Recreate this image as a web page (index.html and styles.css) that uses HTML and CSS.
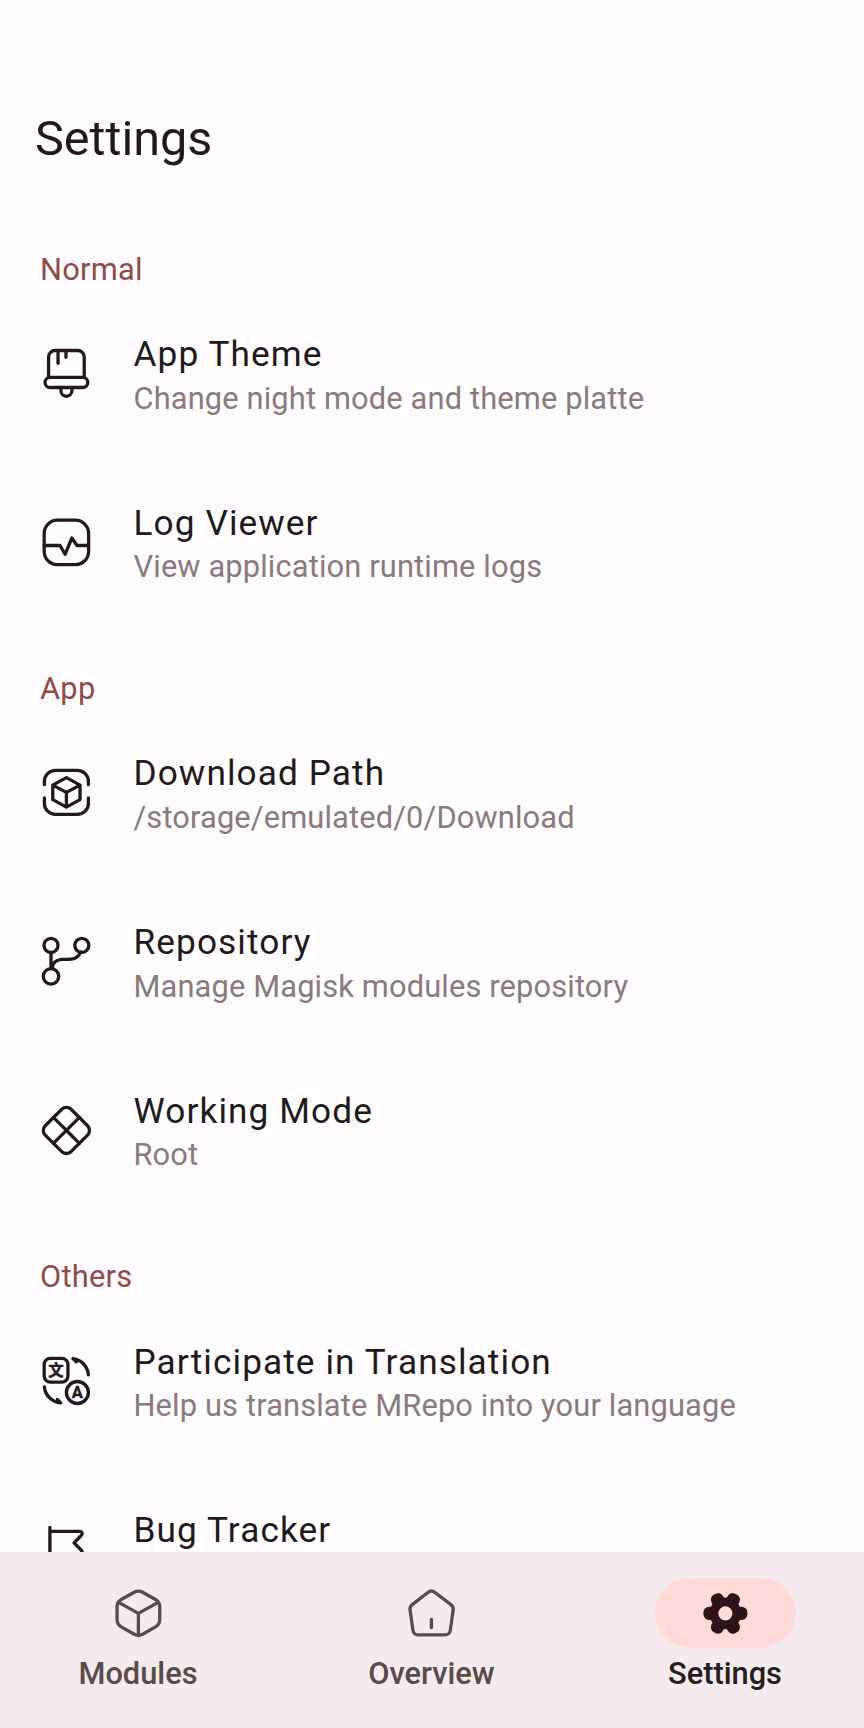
FILE: index.html
```html
<!DOCTYPE html>
<html lang="en">
<head>
    <meta charset="UTF-8">
    <meta name="viewport" content="width=device-width, initial-scale=1.0">
    <title>Settings</title>
    <link rel="stylesheet" href="styles.css">
</head>
<body>
    <div class="screen">
        <main class="content">
            <h1 class="page-title">Settings</h1>

            <div class="group-label">Normal</div>
            <div class="row">
                <svg class="icon" viewBox="0 0 24 24">
                    <path d="M3.9 13.8V4.6a3 3 0 0 1 3-3h10.2a3 3 0 0 1 3 3v9.2"/>
                    <rect x="2.3" y="13.8" width="19.4" height="4.6" rx="2.3"/>
                    <path d="M9.5 18.4v1.5a2.5 2.5 0 0 0 5 0v-1.5M8.2 1.6v5.8M11.8 1.6v3.1"/>
                </svg>
                <div class="row-text">
                    <div class="row-title">App Theme</div>
                    <div class="row-sub">Change night mode and theme platte</div>
                </div>
            </div>
            <div class="row">
                <svg class="icon" viewBox="0 0 24 24">
                    <rect x="1.9" y="1.9" width="20.2" height="20.2" rx="6"/>
                    <path d="M1.9 13.4H9.1L11.4 17.4L14.5 10L16.8 13.4H22.1"/>
                </svg>
                <div class="row-text">
                    <div class="row-title">Log Viewer</div>
                    <div class="row-sub">View application runtime logs</div>
                </div>
            </div>

            <div class="group-label">App</div>
            <div class="row">
                <svg class="icon" viewBox="0 0 24 24">
                    <path d="M2 8.5V7a5 5 0 0 1 5-5h10a5 5 0 0 1 5 5v1.5M2 14.5V17a5 5 0 0 0 5 5h10a5 5 0 0 0 5-5v-2.5"/>
                    <path d="M12 5.3l6.2 3.4v6.6L12 18.7l-6.2-3.4V8.7zM5.8 8.7L12 12l6.2-3.3M12 12v6.7"/>
                </svg>
                <div class="row-text">
                    <div class="row-title">Download Path</div>
                    <div class="row-sub">/storage/emulated/0/Download</div>
                </div>
            </div>
            <div class="row">
                <svg class="icon" viewBox="0 0 24 24">
                    <circle cx="5" cy="4.7" r="3.2"/>
                    <circle cx="19" cy="4.7" r="3.2"/>
                    <circle cx="5" cy="18.8" r="3.5"/>
                    <path d="M5 7.9v7.4M5.6 15c0-2.6 2-3.6 4.2-3.9h3.2c2.5 0 4.6-1 5.5-3.3"/>
                </svg>
                <div class="row-text">
                    <div class="row-title">Repository</div>
                    <div class="row-sub">Manage Magisk modules repository</div>
                </div>
            </div>
            <div class="row">
                <svg class="icon" viewBox="0 0 24 24">
                    <rect x="3.7" y="3.7" width="16.6" height="16.6" rx="3" transform="rotate(45 12 12)"/>
                    <path d="M6.1 6.1L17.9 17.9M17.9 6.1L6.1 17.9"/>
                </svg>
                <div class="row-text">
                    <div class="row-title">Working Mode</div>
                    <div class="row-sub">Root</div>
                </div>
            </div>

            <div class="group-label">Others</div>
            <div class="row">
                <svg class="icon" viewBox="0 0 24 24">
                    <rect x="1.9" y="2" width="10.8" height="10.8" rx="2.8"/>
                    <circle cx="17" cy="17.5" r="5"/>
                    <path d="M15 2.1a8 8 0 0 1 7 7.4M15 2.1l1.5 1.5M2 15a8 8 0 0 0 7.4 7.2M9.4 22.2l-1.5-1.5"/>
                    <text class="icon-glyph cjk" x="7.3" y="9.9">文</text>
                    <text class="icon-glyph" x="17" y="20.2">A</text>
                </svg>
                <div class="row-text">
                    <div class="row-title">Participate in Translation</div>
                    <div class="row-sub">Help us translate MRepo into your language</div>
                </div>
            </div>
            <div class="row">
                <svg class="icon" viewBox="0 0 24 24">
                    <path d="M4.5 22V2M4.5 3.8H18c1 0 1.5 .9 .9 1.7L15.5 9l3.4 3.5c.6 .8 .1 1.7-.9 1.7H4.5"/>
                </svg>
                <div class="row-text">
                    <div class="row-title">Bug Tracker</div>
                </div>
            </div>
        </main>

        <nav class="bottom-nav">
            <div class="nav-item">
                <div class="nav-pill">
                    <svg class="nav-icon" viewBox="0 0 24 24">
                        <path d="M10.1 2.4a3.8 3.8 0 0 1 3.8 0l5.9 3.3a3.8 3.8 0 0 1 1.9 3.3v5.8a3.8 3.8 0 0 1-1.9 3.3l-5.9 3.4a3.8 3.8 0 0 1-3.8 0l-5.9-3.4a3.8 3.8 0 0 1-1.9-3.3V9a3.8 3.8 0 0 1 1.9-3.3z"/>
                        <path d="M3 7L12 12l9-5M12 12v10"/>
                    </svg>
                </div>
                <span class="nav-label">Modules</span>
            </div>
            <div class="nav-item">
                <div class="nav-pill">
                    <svg class="nav-icon" viewBox="0 0 24 24">
                        <path d="M10.4 2.5a2.5 2.5 0 0 1 3.2 0l7.3 5.5a2.6 2.6 0 0 1 1 2.4l-1.3 9.2a2.5 2.5 0 0 1-2.4 2.2H6a2.5 2.5 0 0 1-2.4-2.2L2.3 10.4a2.6 2.6 0 0 1 1-2.4z"/>
                        <path d="M12 14.7v3.7"/>
                    </svg>
                </div>
                <span class="nav-label">Overview</span>
            </div>
            <div class="nav-item active">
                <div class="nav-pill">
                    <svg class="nav-icon gear" viewBox="0 0 24 24">
                        <circle cx="12" cy="12" r="7.2"/>
                        <rect x="2" y="9" width="20" height="6" rx="2.6"/>
                        <rect x="2" y="9" width="20" height="6" rx="2.6" transform="rotate(60 12 12)"/>
                        <rect x="2" y="9" width="20" height="6" rx="2.6" transform="rotate(120 12 12)"/>
                        <circle class="gear-hole" cx="12" cy="12" r="3.2"/>
                    </svg>
                </div>
                <span class="nav-label">Settings</span>
            </div>
        </nav>
    </div>
</body>
</html>
```
FILE: styles.css
```css
html, body {
    margin: 0;
    padding: 0;
}
body {
    background-color: #fffbff;
    font-family: Roboto, 'Noto Sans', sans-serif;
}
.screen {
    display: flex;
    flex-direction: column;
    height: 100vh;
    overflow: hidden;
}
.content {
    flex: 1;
    min-height: 0;
    overflow: hidden;
}
.page-title {
    margin: 0;
    padding: 95px 35px 24px;
    font-size: 48.6px;
    font-weight: 400;
    line-height: 88px;
    color: #201a1a;
}
.group-label {
    padding: 43px 40px 0;
    font-size: 30.8px;
    line-height: 39px;
    letter-spacing: 0.25px;
    color: #904a49;
}
.row {
    display: flex;
    align-items: center;
    gap: 40.7px;
    height: 168.7px;
    padding-left: 40px;
}
.icon {
    flex: none;
    width: 52.8px;
    height: 52.8px;
    fill: none;
    stroke: #201a1a;
    stroke-width: 1.5;
    stroke-linecap: round;
    stroke-linejoin: round;
    overflow: visible;
}
.icon-glyph {
    fill: #201a1a;
    stroke: #201a1a;
    stroke-width: 0.2;
    font-size: 7.5px;
    font-weight: 700;
    text-anchor: middle;
}
.icon-glyph.cjk {
    font-size: 7px;
    font-family: 'Noto Sans CJK SC', sans-serif;
}
.row-text {
    min-height: 88.5px;
    padding-top: 6px;
}
.row-title {
    font-size: 35.2px;
    line-height: 44px;
    letter-spacing: 1.1px;
    color: #201a1a;
}
.row-sub {
    margin-top: 0.5px;
    font-size: 30.8px;
    line-height: 44px;
    letter-spacing: 0.15px;
    color: #8a7a79;
}
.bottom-nav {
    flex: none;
    display: flex;
    justify-content: space-between;
    height: 176px;
    padding: 0 59px 0 58px;
    box-sizing: border-box;
    background-color: #f5ebee;
}
.nav-item {
    display: flex;
    flex-direction: column;
    align-items: center;
    width: 160px;
    padding-top: 26px;
}
.nav-pill {
    display: flex;
    justify-content: center;
    align-items: center;
    width: 141px;
    height: 70.4px;
    border-radius: 36px;
}
.nav-item.active .nav-pill {
    background-color: #ffdad6;
}
.nav-icon {
    width: 52.8px;
    height: 52.8px;
    fill: none;
    stroke: #5a4a49;
    stroke-width: 1.5;
    stroke-linecap: round;
    stroke-linejoin: round;
}
.nav-icon.gear {
    fill: #2c1514;
    stroke: none;
}
.gear-hole {
    fill: #ffdad6;
}
.nav-label {
    margin-top: 4px;
    font-size: 30.8px;
    font-weight: 500;
    line-height: 44px;
    color: #5a4a49;
}
.nav-item.active .nav-label {
    color: #241e1e;
}
```
